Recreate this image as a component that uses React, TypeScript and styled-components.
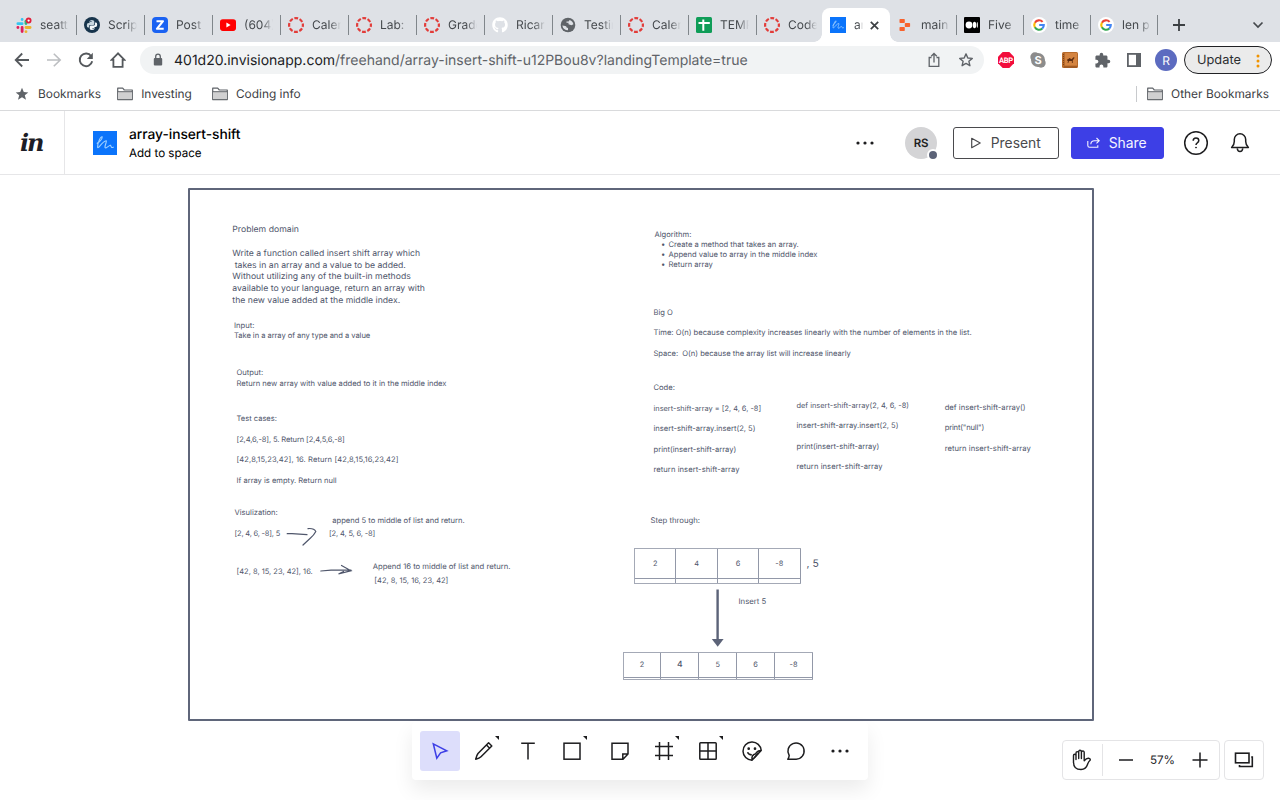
import React from 'react';
import styled, { createGlobalStyle, css } from 'styled-components';
import { FaGithub } from 'react-icons/fa';
import { MdExtension } from 'react-icons/md';

const Global = createGlobalStyle`
  *, *::before, *::after { box-sizing: border-box; }
  html, body { margin: 0; padding: 0; }
  body { font-family: Inter, "Liberation Sans", sans-serif; background: #fff; text-rendering: geometricPrecision; }
`;

const Window = styled.div`
  display: flex;
  flex-direction: column;
  width: 1280px;
  height: 800px;
  overflow: hidden;
  background: #fff;
`;

/* ---------- browser tabs ---------- */

const TabStrip = styled.div`
  display: flex;
  align-items: flex-end;
  flex: none;
  height: 42px;
  padding-left: 8px;
  background: #dee1e6;
`;

const Tab = styled.div<{ $w: number; $active?: boolean; $line?: boolean }>`
  position: relative;
  display: flex;
  align-items: center;
  flex: none;
  width: ${(p) => p.$w}px;
  height: 34px;
  padding-left: 8px;
  ${(p) =>
    p.$active &&
    css`
      margin-right: -1px;
      background: #fff;
      border-radius: 8px 8px 0 0;
      &::before,
      &::after {
        content: '';
        position: absolute;
        bottom: 0;
        width: 8px;
        height: 8px;
      }
      &::before { left: -8px; background: radial-gradient(circle at 0 0, transparent 7.5px, #fff 8px); }
      &::after { right: -8px; background: radial-gradient(circle at 100% 0, transparent 7.5px, #fff 8px); }
    `}
  ${(p) =>
    p.$line &&
    css`
      &::after {
        content: '';
        position: absolute;
        right: -1px;
        top: 7px;
        width: 1px;
        height: 20px;
        background: #80868b;
      }
    `}
`;

const Favicon = styled.span`
  display: flex;
  flex: none;
  width: 16px;
  height: 16px;
  svg { display: block; }
`;

const TabTitle = styled.span<{ $w: number; $fade?: number }>`
  width: ${(p) => p.$w}px;
  margin-left: 8px;
  overflow: hidden;
  white-space: nowrap;
  font-size: 12px;
  line-height: 16px;
  color: #45494d;
  mask-image: linear-gradient(to right, #000 calc(100% - ${(p) => p.$fade ?? 11}px), transparent);
`;

const TabClose = styled.span`
  display: flex;
  margin-left: 7px;
`;

const NewTab = styled.span`
  display: flex;
  align-self: flex-start;
  margin: 19px 0 0 16px;
`;

const TabSearch = styled.span`
  display: flex;
  align-self: flex-start;
  margin: 21px 16px 0 auto;
`;

/* ---------- address bar ---------- */

const NavBar = styled.div`
  display: flex;
  align-items: center;
  flex: none;
  height: 36px;
  padding: 0 8px 0 14px;
`;

const NavButtons = styled.div`
  display: flex;
  gap: 16px;
  svg { display: block; }
`;

const Omnibox = styled.div`
  display: flex;
  align-items: center;
  width: 844px;
  height: 28px;
  margin-left: 14px;
  padding: 0 10px 0 13px;
  border-radius: 14px;
  background: #f1f3f4;
`;

const Url = styled.div`
  flex: 1;
  margin-left: 11px;
  padding-top: 2px;
  white-space: nowrap;
  font-size: 14px;
  line-height: 20px;
  color: #5f6368;
  b { font-weight: 400; color: #202124; }
`;

const OmniIcons = styled.div`
  display: flex;
  gap: 16px;
`;

const Extensions = styled.div`
  display: flex;
  align-items: center;
  gap: 16px;
  margin-left: 14px;
`;

const Profile = styled.div`
  display: flex;
  align-items: center;
  justify-content: center;
  width: 22px;
  height: 22px;
  margin-left: 14px;
  border-radius: 50%;
  background: #5c6bc0;
  color: #fff;
  font-size: 12px;
`;

const UpdateButton = styled.div`
  display: flex;
  align-items: center;
  width: 88px;
  height: 28px;
  margin-left: 7px;
  padding: 1px 11px 0 12px;
  border: 1px solid #202124;
  border-radius: 14px;
  background: #ebebeb;
  color: #2c2e31;
  font-size: 12.8px;
  justify-content: space-between;
`;

/* ---------- bookmarks ---------- */

const BookmarkBar = styled.div`
  display: flex;
  align-items: center;
  flex: none;
  height: 33px;
  padding: 0 11px 0 15px;
  border-bottom: 1px solid #d9dadc;
`;

const Bookmark = styled.div<{ $after?: number; $gap?: number }>`
  display: flex;
  align-items: center;
  gap: ${(p) => p.$gap ?? 8}px;
  margin-right: ${(p) => p.$after ?? 0}px;
  font-size: 11.9px;
  line-height: 16px;
  color: #3c4043;
  white-space: nowrap;
`;

const BookmarkDivider = styled.span`
  width: 1px;
  height: 16px;
  margin: 0 10px 0 auto;
  background: #c8cacd;
`;

/* ---------- app header ---------- */

const Header = styled.header`
  display: flex;
  align-items: center;
  flex: none;
  height: 64px;
  border-bottom: 1px solid #e6e6e8;
`;

const Brand = styled.div`
  display: flex;
  align-items: center;
  width: 65px;
  height: 100%;
  padding: 1px 0 0 20px;
  border-right: 1px solid #e6e6e8;
  font: italic bold 24px/30px "DejaVu Serif", serif;
  letter-spacing: -2px;
  color: #1d1d26;
`;

const DocIcon = styled.span`
  display: flex;
  margin-left: 28px;
`;

const DocTitle = styled.div`
  margin: 2px 0 0 12px;
  color: #000;
  h1 { margin: 0; font-size: 13.8px; font-weight: 500; line-height: 18px; letter-spacing: -0.05px; }
  p { margin: 0; font-size: 11.6px; line-height: 18px; }
`;

const HeaderActions = styled.div`
  display: flex;
  align-items: center;
  margin-left: auto;
  padding-right: 30px;
`;

const Avatar = styled.div`
  position: relative;
  display: flex;
  align-items: center;
  justify-content: center;
  width: 32px;
  height: 32px;
  margin-left: 31px;
  border-radius: 50%;
  background: #d4d4d6;
  color: #1d1d1f;
  font-size: 11.5px;
  font-weight: 600;
  letter-spacing: -0.2px;
`;

const Presence = styled.span`
  position: absolute;
  right: -2px;
  bottom: -2px;
  width: 12px;
  height: 12px;
  border: 2px solid #fff;
  border-radius: 50%;
  background: #5c6378;
`;

const HeaderButton = styled.button<{ $w: number; $primary?: boolean }>`
  display: flex;
  align-items: center;
  width: ${(p) => p.$w}px;
  height: 32px;
  padding: 0 0 0 ${(p) => (p.$primary ? 14.5 : 15.5)}px;
  margin-left: ${(p) => (p.$primary ? 12 : 16)}px;
  gap: 9.2px;
  border: 1px solid ${(p) => (p.$primary ? '#3d3fe6' : '#4a4a4d')};
  border-radius: 3px;
  background: ${(p) => (p.$primary ? '#3d3fe6' : '#fff')};
  color: ${(p) => (p.$primary ? '#f4f4ff' : '#4a4a4d')};
  font: 400 13.9px/20px Inter, sans-serif;
`;

const HeaderIcon = styled.span<{ $before: number }>`
  display: flex;
  margin-left: ${(p) => p.$before}px;
`;

/* ---------- canvas ---------- */

const CANVAS_TOP = 175;
const INK = '#4f566b';

const Canvas = styled.main`
  position: relative;
  flex: 1;
  overflow: hidden;
  background: #fff;
`;

const Frame = styled.div`
  position: absolute;
  left: 188px;
  top: 13px;
  width: 906px;
  height: 532.5px;
  border: 2px solid #5f667a;
  border-radius: 1px;
`;

const Note = styled.div<{ $x: number; $y: number; $size?: number; $line?: number; $track?: number }>`
  position: absolute;
  left: ${(p) => p.$x}px;
  top: ${(p) => p.$y + 0.7 - CANVAS_TOP - (p.$line ?? 10.27) / 2}px;
  font-size: ${(p) => p.$size ?? 7.6}px;
  line-height: ${(p) => p.$line ?? 10.27}px;
  letter-spacing: ${(p) => p.$track ?? 0}px;
  color: ${INK};
  white-space: pre;
`;

const Track = styled.span<{ $by: number }>`
  letter-spacing: ${(p) => p.$by}px;
`;

const Bullet = styled.div`
  display: flex;
  &::before { content: '•'; width: 7.5px; margin-left: 6.5px; }
`;

const Table = styled.div<{ $x: number; $y: number; $w: number; $h: number; $cols: number; $foot: number }>`
  position: absolute;
  left: ${(p) => p.$x}px;
  top: ${(p) => p.$y - CANVAS_TOP}px;
  display: grid;
  grid-template-columns: repeat(${(p) => p.$cols}, 1fr);
  grid-template-rows: 1fr ${(p) => p.$foot}px;
  width: ${(p) => p.$w}px;
  height: ${(p) => p.$h}px;
  border: solid #a4a9b6;
  border-width: 1px 0 1px 1px;
`;

const Cell = styled.div<{ $big?: boolean }>`
  display: flex;
  align-items: center;
  justify-content: center;
  border-right: 1px solid #9298a8;
  border-bottom: 1px solid #9298a8;
  font-size: ${(p) => (p.$big ? 8.6 : 7.4)}px;
  font-weight: ${(p) => (p.$big ? 500 : 400)};
  color: ${INK};
`;

const FootCell = styled.div`
  border-right: 1px solid #9298a8;
`;

const Ink = styled.svg<{ $x: number; $y: number }>`
  position: absolute;
  left: ${(p) => p.$x}px;
  top: ${(p) => p.$y - CANVAS_TOP}px;
`;

const Dock = styled.div`
  position: absolute;
  left: 412px;
  top: 547px;
  display: flex;
  gap: 4px;
  width: 456px;
  height: 58px;
  padding: 9px 8px;
  border-radius: 4px;
  background: #fff;
  box-shadow: 0 10px 20px rgba(0, 0, 0, 0.08);
`;

const Tool = styled.button<{ $on?: boolean; $gap?: boolean }>`
  position: relative;
  display: flex;
  align-items: center;
  justify-content: center;
  flex: none;
  width: 40px;
  height: 40px;
  margin: 0 0 0 ${(p) => (p.$gap ? 4 : 0)}px;
  padding: 0;
  border: 0;
  border-radius: 3px;
  background: ${(p) => (p.$on ? '#dddefb' : 'transparent')};
`;

const Corner = styled.span`
  position: absolute;
  right: 5px;
  top: 5px;
  width: 4px;
  height: 4px;
  background: #1d1d1f;
  clip-path: polygon(0 0, 100% 0, 100% 100%);
`;

const ViewControls = styled.div`
  position: absolute;
  left: 1062px;
  top: 565px;
  display: flex;
  gap: 4px;
`;

const ControlBox = styled.div<{ $w: number }>`
  display: flex;
  align-items: center;
  justify-content: center;
  width: ${(p) => p.$w}px;
  height: 40px;
  border: 1px solid #e4e4e6;
  border-radius: 4px;
  background: #fff;
`;

const HandButton = styled.span`
  display: flex;
  align-items: center;
  justify-content: center;
  width: 40px;
  height: 32px;
  padding-right: 1px;
  border-right: 1px solid #e4e4e6;
`;

const ZoomGroup = styled.div`
  display: flex;
  align-items: center;
  justify-content: space-between;
  flex: 1;
  padding: 0 11px 0 16px;
  font-size: 11.7px;
  color: #1d1d1f;
`;

/* ---------- icons ---------- */

const Slack = () => (
  <svg width="17" height="17" viewBox="0 0 17 17" fill="none" strokeWidth="3" strokeLinecap="round">
    <path d="M6.5 2v.1M2 6.600h4.500" stroke="#36c5f0" />
    <path d="M10.600 4v2.500" stroke="#2eb67d" />
    <path d="M10.600 10.600H15M10.600 15v.1" stroke="#ecb22e" />
    <path d="M6.500 10.600V15M2 10.600h.1" stroke="#e01e5a" />
    <circle cx="13.400" cy="3.200" r="3.100" fill="#e01e3a" />
    <circle cx="13.400" cy="3.200" r="1.200" fill="#fff" />
  </svg>
);

const Python = () => (
  <svg width="16" height="16" viewBox="0 0 16 16">
    <circle cx="8" cy="8" r="8" fill="#17344c" />
    <path d="M5.500 6V4.500Q5.500 3 7.800 3 10.300 3 10.300 4.500V7Q10.300 8 9 8H6.300Q5 8 5 9.300V10.500H4Q2.800 10.500 2.800 8.300 2.800 6 4.500 6H8" fill="#c9d7e0" />
    <path d="M10.500 10V11.500Q10.500 13 8.200 13 5.700 13 5.700 11.500V9.500Q5.700 8.600 7 8.600H9.700Q11 8.600 11 7V5.500H12Q13.200 5.500 13.200 7.800 13.200 10 11.500 10H8" fill="#f3f7f9" />
    <circle cx="6.900" cy="4.400" r=".6" fill="#17344c" />
    <circle cx="9.100" cy="11.700" r=".6" fill="#17344c" />
  </svg>
);

const Zed = () => (
  <svg width="16" height="16" viewBox="0 0 16 16">
    <rect width="16" height="16" rx="4" fill="#1a62f2" />
    <path d="M4.500 4.200H11L4.900 11.800H11.700" fill="none" stroke="#fff" strokeWidth="2.100" strokeLinejoin="round" />
  </svg>
);

const YouTube = () => (
  <svg width="16" height="16" viewBox="0 0 16 16">
    <rect y="2.300" width="16" height="11.600" rx="2.800" fill="#f00" />
    <path d="M6.400 5.600v5l4.200-2.500z" fill="#fff" />
  </svg>
);

const CanvasRing = () => (
  <svg width="16" height="16" viewBox="0 0 16 16" fill="none">
    <circle cx="8" cy="8" r="6.900" stroke="#e23c39" strokeWidth="2.200" strokeDasharray="3.820 1.600" strokeDashoffset="1.910" />
  </svg>
);

const Globe = () => (
  <svg width="16" height="16" viewBox="0 0 16 16">
    <circle cx="8" cy="8" r="7.300" fill="#5f6368" />
    <path d="M2.300 8.600L5.300 9Q6.600 9.200 6.600 10.500L8 11v2.300Q3.300 13.300 2.300 8.600zM9.600 2.900Q13 4 13.400 7.300L11.500 8.200 8.500 7.300V5.800H6.500V4.500H8.600z" fill="#dee1e6" />
  </svg>
);

const Sheets = () => (
  <svg width="16" height="16" viewBox="0 0 16 16">
    <rect width="16" height="16" rx="1.500" fill="#0f9d58" />
    <path d="M2.500 6H13.800M7.300 2.500V13.800" stroke="#fff" strokeWidth="2" />
  </svg>
);

const Freehand = ({ size }: { size: number }) => (
  <svg width={size} height={size} viewBox="0 0 24 24">
    <rect width="24" height="24" fill="#0b74fb" />
    <path
      d="M4.200 12.300C6.500 11 9.300 8 9.200 5.800 7.500 5 4.500 12 4.600 16.300 5.300 18.300 9 10.500 13.200 9.700 14.200 10.500 11.600 14 12 16.500 13 18.300 15.700 14.300 17.400 14.200 18.300 14.800 17.500 17.300 20.300 16.200"
      fill="none"
      stroke="#9fd0ff"
      strokeWidth="1.150"
      strokeLinecap="round"
      strokeLinejoin="round"
    />
  </svg>
);

const Replit = () => (
  <svg width="16" height="16" viewBox="0 0 16 16" fill="#f8622c">
    <rect x="2.500" y="2" width="5.300" height="4" rx=".8" />
    <rect x="7.800" y="6" width="5.300" height="4" rx=".8" />
    <rect x="2.500" y="10" width="5.300" height="4" rx=".8" />
  </svg>
);

const Medium = () => (
  <svg width="16" height="16" viewBox="0 0 16 16">
    <rect width="16" height="16" rx="1" fill="#000" />
    <circle cx="5" cy="8" r="3.400" fill="#fff" />
    <ellipse cx="10.500" cy="8" rx="1.700" ry="3.200" fill="#fff" />
    <ellipse cx="13.300" cy="8" rx=".6" ry="2.900" fill="#fff" />
  </svg>
);

const Google = () => (
  <svg width="16" height="16" viewBox="0 0 16 16" fill="none" strokeWidth="2.100">
    <circle cx="8" cy="8" r="8" fill="#fff" />
    <path d="M11.600 4.900A4.800 4.800 0 0 0 3.900 5.700" stroke="#ea4335" />
    <path d="M3.900 5.600A4.800 4.800 0 0 0 3.900 10.400" stroke="#fbbc05" />
    <path d="M3.900 10.300A4.800 4.800 0 0 0 11.200 11.600" stroke="#34a853" />
    <path d="M11.200 11.600A4.700 4.700 0 0 0 12.800 8H8.200" stroke="#4285f4" />
  </svg>
);

const Folder = () => (
  <svg width="16" height="14" viewBox="0 0 16 14">
    <path d="M.7 12.600V1.200H5.700L7.300 3H15.300V12.600z" fill="#fff" stroke="#5f6368" strokeWidth="1.200" strokeLinejoin="round" />
    <path d="M1.200 5H14.800V12.100H1.200z" fill="#d0d0d1" />
    <path d="M.7 4.700H15.300" stroke="#5f6368" />
  </svg>
);

const Dots = () => (
  <svg width="18" height="4" viewBox="0 0 18 4" fill="#1d1d1f">
    <circle cx="2" cy="2" r="1.600" />
    <circle cx="9" cy="2" r="1.600" />
    <circle cx="16" cy="2" r="1.600" />
  </svg>
);

const line = { fill: 'none', stroke: '#1d1d1f', strokeWidth: 1.5 } as const;

/* ---------- data ---------- */

const leftTabs: [React.ReactNode, string][] = [
  [<Slack />, 'seatt'],
  [<Python />, 'Scrip'],
  [<Zed />, 'Post'],
  [<YouTube />, '(604)'],
  [<CanvasRing />, 'Calen'],
  [<CanvasRing />, 'Lab: '],
  [<CanvasRing />, 'Grade'],
  [<FaGithub size={16} color="#fff" />, 'Ricar'],
  [<Globe />, 'Testin'],
  [<CanvasRing />, 'Calen'],
  [<Sheets />, 'TEMP'],
  [<CanvasRing />, 'Code'],
];

const rightTabs: [React.ReactNode, string][] = [
  [<Replit />, 'main'],
  [<Medium />, 'Five'],
  [<Google />, 'time'],
  [<Google />, 'len p'],
];

export default function App() {
  return (
    <Window>
      <Global />
      <TabStrip>
        {leftTabs.map(([icon, title], i) => (
          <Tab key={i} $w={i < 11 ? 68 : 66} $line={i < 11}>
            <Favicon>{icon}</Favicon>
            <TabTitle $w={29}>{title}</TabTitle>
          </Tab>
        ))}
        <Tab $w={68} $active>
          <Favicon><Freehand size={16} /></Favicon>
          <TabTitle $w={9} $fade={4}>ar</TabTitle>
          <TabClose>
            <svg width="9" height="9" viewBox="0 0 9 9"><path d="M.8 .8L8.200 8.200M8.200 .8L.8 8.200" stroke="#3c4043" strokeWidth="1.700" /></svg>
          </TabClose>
        </Tab>
        {rightTabs.map(([icon, title], i) => (
          <Tab key={i} $w={67} $line>
            <Favicon>{icon}</Favicon>
            <TabTitle $w={29}>{title}</TabTitle>
          </Tab>
        ))}
        <NewTab>
          <svg width="12" height="12" viewBox="0 0 12 12"><path d="M6 0V12M0 6H12" stroke="#3c4043" strokeWidth="1.800" /></svg>
        </NewTab>
        <TabSearch>
          <svg width="12" height="8" viewBox="0 0 12 8"><path d="M1.500 1.500L6 6L10.500 1.500" fill="none" stroke="#45494d" strokeWidth="1.700" /></svg>
        </TabSearch>
      </TabStrip>

      <NavBar>
        <NavButtons>
          <svg width="16" height="16" viewBox="0 0 16 16" fill="none" stroke="#55595d" strokeWidth="1.800"><path d="M15 8H2M8.200 1.500L1.700 8L8.200 14.500" /></svg>
          <svg width="16" height="16" viewBox="0 0 16 16" fill="none" stroke="#bcbec1" strokeWidth="1.600"><path d="M1 8H14M7.800 1.700L14.200 8L7.800 14.300" /></svg>
          <svg width="16" height="16" viewBox="0 0 16 16" fill="none"><path d="M13.200 4.200A6.300 6.300 0 1 0 14.200 9.300" stroke="#55595d" strokeWidth="1.900" /><path d="M14.800 .8V7H8.800z" fill="#55595d" /></svg>
          <svg width="16" height="16" viewBox="0 0 16 16" fill="none" stroke="#55595d" strokeWidth="1.800"><path d="M8 1.400L1.600 7.900H3.400V14.800H12.600V7.900H14.400z" /></svg>
        </NavButtons>
        <Omnibox>
          <svg width="10" height="14" viewBox="0 0 10 14"><rect x=".8" y="5" width="8.400" height="7.500" rx="1" fill="#5f6368" /><path d="M2.700 5.500V3.400a2.300 2.300 0 0 1 4.600 0V5.500" fill="none" stroke="#5f6368" strokeWidth="1.300" /></svg>
          <Url><b>401d20.invisionapp.com</b>/freehand/array-insert-shift-u12PBou8v?landingTemplate=true</Url>
          <OmniIcons>
            <svg width="16" height="16" viewBox="0 0 16 16" fill="none" stroke="#5f6368" strokeWidth="1.300"><path d="M5.500 5.500H3.200V14.300H12.800V5.500H10.500M8 10.500V1.800M5.200 4.300L8 1.500L10.800 4.300" /></svg>
            <svg width="16" height="16" viewBox="0 0 16 16" fill="none" stroke="#5f6368" strokeWidth="1.400" strokeLinejoin="round"><path d="M8 1.900L9.800 6L14.300 6.400L10.900 9.300L11.900 13.700L8 11.400L4.100 13.700L5.100 9.300L1.700 6.400L6.200 6z" /></svg>
          </OmniIcons>
        </Omnibox>
        <Extensions>
          <svg width="16" height="16" viewBox="0 0 16 16"><path d="M4.700 0H11.300L16 4.700V11.300L11.300 16H4.700L0 11.300V4.700z" fill="#f20d3c" /><text x="8" y="10.800" textAnchor="middle" fontFamily="Roboto" fontWeight="700" fontSize="7.600" letterSpacing="-.3" fill="#fff">ABP</text></svg>
          <svg width="16" height="16" viewBox="0 0 16 16" fill="#8c8c8c"><circle cx="5" cy="5" r="4.700" /><circle cx="11" cy="11" r="4.700" /><circle cx="8" cy="8" r="7" /><text x="8" y="12" textAnchor="middle" fontFamily="Inter" fontWeight="700" fontSize="11" fill="#fff">S</text></svg>
          <svg width="16" height="16" viewBox="0 0 16 16"><rect width="16" height="16" rx="1.500" fill="#b76a2b" /><rect x="3" y="1" width="12" height="12.500" fill="#d48441" /><path d="M1.500 2V14" stroke="#7d431a" strokeDasharray="1 1" /><path d="M2 15H15" stroke="#8d4d1f" /><path d="M5 8.500Q5.500 6.300 6.700 7 7.500 5 8.600 6.800L9.700 7.300L11.300 5.200L12.800 5.800L11.800 6.800L10.700 8.800V11H9.900V9L7 9L6.300 11H5.600L6 9z" fill="#5b2b0f" /></svg>
          <MdExtension size={17} color="#5f6368" />
          <svg width="14" height="14" viewBox="0 0 14 14"><rect x=".9" y=".9" width="12.200" height="12.200" fill="#fff" stroke="#5f6368" strokeWidth="1.800" /><rect x="9" y="1" width="4.500" height="12" fill="#5f6368" /></svg>
        </Extensions>
        <Profile>R</Profile>
        <UpdateButton>
          Update
          <svg width="4" height="14" viewBox="0 0 4 14" fill="#f09300"><circle cx="2" cy="2" r="1.500" /><circle cx="2" cy="7" r="1.500" /><circle cx="2" cy="12" r="1.500" /></svg>
        </UpdateButton>
      </NavBar>

      <BookmarkBar>
        <Bookmark $after={16} $gap={9}>
          <svg width="14" height="14" viewBox="0 0 14 14"><path d="M7 .8L8.800 5.100L13.300 5.400L9.800 8.300L11 12.800L7 10.300L3 12.800L4.200 8.300L.7 5.400L5.200 5.100z" fill="#5f6368" /></svg>
          Bookmarks
        </Bookmark>
        <Bookmark $after={20}><Folder />Investing</Bookmark>
        <Bookmark><Folder />Coding info</Bookmark>
        <BookmarkDivider />
        <Bookmark><Folder />Other Bookmarks</Bookmark>
      </BookmarkBar>

      <Header>
        <Brand>in</Brand>
        <DocIcon><Freehand size={24} /></DocIcon>
        <DocTitle>
          <h1>array-insert-shift</h1>
          <p>Add to space</p>
        </DocTitle>
        <HeaderActions>
          <Dots />
          <Avatar>RS<Presence /></Avatar>
          <HeaderButton $w={106}>
            <svg width="12" height="12" viewBox="0 0 12 12"><path d="M1.700 1.300L10.200 6L1.700 10.700z" fill="none" stroke="#4a4a4d" strokeWidth="1.200" strokeLinejoin="round" /></svg>
            Present
          </HeaderButton>
          <HeaderButton $w={93} $primary>
            <svg width="13" height="12" viewBox="0 0 13 12" fill="none" stroke="#f4f4ff" strokeWidth="1.100"><path d="M.8 4V8.500Q.8 10.300 2.600 10.300H10.800V8.300M3.800 7.300Q4 3.700 7.500 3.700H12M9.500 1L12.200 3.700L9.500 6.400" /></svg>
            Share
          </HeaderButton>
          <HeaderIcon $before={19}>
            <svg width="26" height="26" viewBox="0 0 26 26" {...line}><circle cx="13" cy="13" r="11.300" /><path d="M10.200 10.800Q10.200 8 13 8T15.800 10.600Q15.800 12 14.300 12.800 13 13.500 13 15" /><circle cx="13" cy="17.600" r=".5" fill="#1d1d1f" strokeWidth=".9" /></svg>
          </HeaderIcon>
          <HeaderIcon $before={21}>
            <svg width="20" height="22" viewBox="0 0 20 22" {...line}><path d="M1.600 15.500H18.400Q15.700 13 15.700 9.500V7.500A5.700 5.700 0 0 0 4.300 7.500V9.500Q4.300 13 1.600 15.500zM7.300 16.500Q7.500 19.500 10 19.500T12.700 16.500" strokeLinejoin="round" /></svg>
          </HeaderIcon>
        </HeaderActions>
      </Header>

      <Canvas>
        <Frame />

        <Note $x={232.3} $y={230.6} $size={8.68} $line={11.75}>{'Problem domain\n\nWrite a function called insert shift array which\n takes in an array and a value to be added.\nWithout utilizing any of the built-in methods\navailable to your language, return an array with\nthe new value added at the middle index.'}</Note>
        <Note $x={234} $y={325}>{'Input:\n'}<Track $by={-0.06}>Take in a array of any type and a value</Track></Note>
        <Note $x={236.5} $y={372.8}>{'Output:\nReturn new array with value added to it in the middle index'}</Note>
        <Note $x={236.5} $y={418.7} $size={7.55}>
          {'Test cases:\n\n'}
          <Track $by={-0.12}>{'[2,4,6,-8], 5. Return [2,4,5,6,-8]'}</Track>
          {'\n\n'}
          <Track $by={0.1}>{'[42,8,15,23,42], 16. Return [42,8,15,16,23,42]'}</Track>
          {'\n\nIf array is empty. Return null'}
        </Note>
        <Note $x={234.5} $y={512}>Visulization:</Note>
        <Note $x={234.5} $y={533} $size={7.5} $track={-0.2}>[2, 4, 6, -8], 5</Note>
        <Note $x={332.3} $y={520}>append 5 to middle of list and return.</Note>
        <Note $x={329} $y={533.6} $size={7.5} $track={-0.15}>[2, 4, 5, 6, -8]</Note>
        <Note $x={236.5} $y={571.4} $size={7.5}>[42, 8, 15, 23, 42], 16.</Note>
        <Note $x={372.7} $y={566.3} $size={7.66}>Append 16 to middle of list and return.</Note>
        <Note $x={374.3} $y={580.2} $size={7.5}>[42, 8, 15, 16, 23, 42]</Note>

        <Note $x={654.5} $y={234}>
          Algorithm:
          <Bullet>Create a method that takes an array.</Bullet>
          <Bullet>Append value to array in the middle index</Bullet>
          <Bullet>Return array</Bullet>
        </Note>
        <Note $x={653.5} $y={312}>
          {'Big O\n\nTime: O(n) because complexity increases linearly with the number of elements in the list.\n\n'}
          <Track $by={-0.03}>{'Space:  O(n) because the array list will increase linearly'}</Track>
        </Note>
        <Note $x={653.5} $y={387.6}>Code:</Note>
        <Note $x={653.5} $y={408.3} $size={7.4}>{'insert-shift-array = [2, 4, 6, -8]'}</Note>
        <Note $x={653.5} $y={428.7} $size={7.6}>
          {'insert-shift-array.insert(2, 5)\n\nprint(insert-shift-array)\n\n'}
          <Track $by={0.06}>return insert-shift-array</Track>
        </Note>
        <Note $x={796.5} $y={405.2} $size={7.42}>{'def insert-shift-array(2, 4, 6, -8)'}</Note>
        <Note $x={796.5} $y={425.7} $size={7.6}>
          {'insert-shift-array.insert(2, 5)\n\nprint(insert-shift-array)\n\n'}
          <Track $by={0.06}>return insert-shift-array</Track>
        </Note>
        <Note $x={944.7} $y={407} $size={7.65}>
          {'def insert-shift-array()\n\n'}
          <Track $by={-0.2}>print("null")</Track>
          {'\n\n'}
          <Track $by={0.04}>return insert-shift-array</Track>
        </Note>
        <Note $x={650.5} $y={519.8} $size={7.75}>Step through:</Note>

        <Table $x={634} $y={548} $w={166.5} $h={36} $cols={4} $foot={4.5}>
          {['2', '4', '6', '-8'].map((v) => <Cell key={v}>{v}</Cell>)}
          {[0, 1, 2, 3].map((v) => <FootCell key={v} />)}
        </Table>
        <Note $x={806.5} $y={563.8} $size={10.4}>, 5</Note>
        <Note $x={738.5} $y={600.8} $size={7.75}>Insert 5</Note>
        <Ink $x={710} $y={588} width="16" height="60" viewBox="0 0 16 60">
          <path d="M7.600 1.500V52" stroke="#5c6378" strokeWidth="2.400" />
          <path d="M1.800 51H13.600L7.700 58.800z" fill="#5c6378" />
        </Ink>
        <Table $x={622.5} $y={652} $w={190.5} $h={28} $cols={5} $foot={1.4}>
          {['2', '4', '5', '6', '-8'].map((v) => <Cell key={v} $big={v === '4'}>{v}</Cell>)}
          {[0, 1, 2, 3, 4].map((v) => <FootCell key={v} />)}
        </Table>

        <Ink $x={284} $y={524} width="36" height="24" viewBox="0 0 36 24" fill="none" stroke={INK} strokeWidth="1.200" strokeLinecap="round">
          <path d="M3.200 9.700H8L23 10.600M24 4.600Q30 4 31.800 7.500 30 11 26.500 14L19 21" />
        </Ink>
        <Ink $x={318} $y={562} width="38" height="16" viewBox="0 0 38 16" fill="none" stroke={INK} strokeWidth="1.200" strokeLinecap="round">
          <path d="M2.800 9L13 8.200L33 8.200M23.500 3.500L33 8.700L20.500 12L25.500 9.500" />
        </Ink>

        <Dock>
          <Tool $on>
            <svg width="20" height="20" viewBox="0 0 20 20" fill="none" stroke="#3d3fe6" strokeWidth="1.500" strokeLinejoin="miter"><path d="M3.300 2.800L16.800 9.800L10.600 11.900L6.800 17.300z" /></svg>
          </Tool>
          <Tool>
            <svg width="20" height="20" viewBox="0 0 20 20" {...line}><path d="M14.600 1.800L17.800 5L7 15.800Q5.500 17.300 1.700 18.200 2.700 14.100 4 12.500zM12.500 4L15.700 7.200" strokeLinejoin="round" /></svg>
            <Corner />
          </Tool>
          <Tool>
            <svg width="20" height="20" viewBox="0 0 20 20" {...line}><path d="M3.200 2.200H16.800M10 2.200V18.500" /></svg>
          </Tool>
          <Tool>
            <svg width="20" height="20" viewBox="0 0 20 20" {...line}><rect x="2" y="2.200" width="16" height="16" /></svg>
            <Corner />
          </Tool>
          <Tool $gap>
            <svg width="20" height="20" viewBox="0 0 20 20" {...line}><path d="M2 2.200H18V13L13 18.200H2zM12.800 18V13H18" /></svg>
          </Tool>
          <Tool>
            <svg width="20" height="20" viewBox="0 0 20 20" {...line}><path d="M5.500 1V19M14.500 1V19M1 5.500H19M1 14.500H19" /></svg>
            <Corner />
          </Tool>
          <Tool>
            <svg width="20" height="20" viewBox="0 0 20 20" {...line}><rect x="1.800" y="1.800" width="16.400" height="16.400" rx=".8" /><path d="M10 1.800V18.200M1.800 10H18.200" /></svg>
            <Corner />
          </Tool>
          <Tool>
            <svg width="22" height="22" viewBox="0 0 22 22" {...line}><path d="M20.200 10.500A9.100 9.100 0 1 0 11 20.200" /><path d="M20.200 10.500L11 20.200V17.500Q11 15.500 13 14.500 15 14.300 15.500 12.500 17 10.500 20.200 10.500z" strokeLinejoin="round" /><path d="M13 18L17.500 13" /><path d="M6.500 12.200Q7.500 14.800 10.800 14.800" /><circle cx="7.700" cy="8.700" r=".6" fill="#1d1d1f" /><circle cx="14" cy="8.700" r=".6" fill="#1d1d1f" /></svg>
          </Tool>
          <Tool>
            <svg width="20" height="20" viewBox="0 0 20 20" {...line}><path d="M1.800 18.200H10.200A8.100 8.100 0 1 0 3.200 14.500Q3 16.800 1.800 18.200z" strokeLinejoin="round" /></svg>
          </Tool>
          <Tool><Dots /></Tool>
        </Dock>

        <ViewControls>
          <ControlBox $w={158}>
            <HandButton>
              <svg width="20" height="22" viewBox="0 0 20 22" {...line} strokeWidth="1.400" strokeLinejoin="round" strokeLinecap="round"><path d="M1.500 6.500Q1.500 5.200 2.700 5.200T4 6.500V10.500M4 8V4Q4 2.600 5.300 2.600T6.700 4V9.500M6.700 4V2.700Q6.700 1.300 8 1.300T9.400 2.700V9.500M9.400 3.300Q9.400 2 10.800 2T12.200 3.500V11.800M12.200 11.800Q14.500 9 16.500 9.200 18.500 9.600 18.300 11 16.500 12.500 15.700 15 14 20.300 9 20.500 1.500 20.500 1.500 13V6.500" /></svg>
            </HandButton>
            <ZoomGroup>
              <svg width="14" height="14" viewBox="0 0 14 14" {...line}><path d="M0 7H14" /></svg>
              57%
              <svg width="16" height="16" viewBox="0 0 16 16" {...line}><path d="M8 .5V15.500M.5 8H15.500" /></svg>
            </ZoomGroup>
          </ControlBox>
          <ControlBox $w={40}>
            <svg width="20" height="18" viewBox="0 0 20 18" {...line} strokeWidth="1.600"><rect x="1.500" y="2.200" width="13.500" height="9.600" /><path d="M17.200 6H18.300V15.500H5.500V14" /></svg>
          </ControlBox>
        </ViewControls>
      </Canvas>
    </Window>
  );
}
